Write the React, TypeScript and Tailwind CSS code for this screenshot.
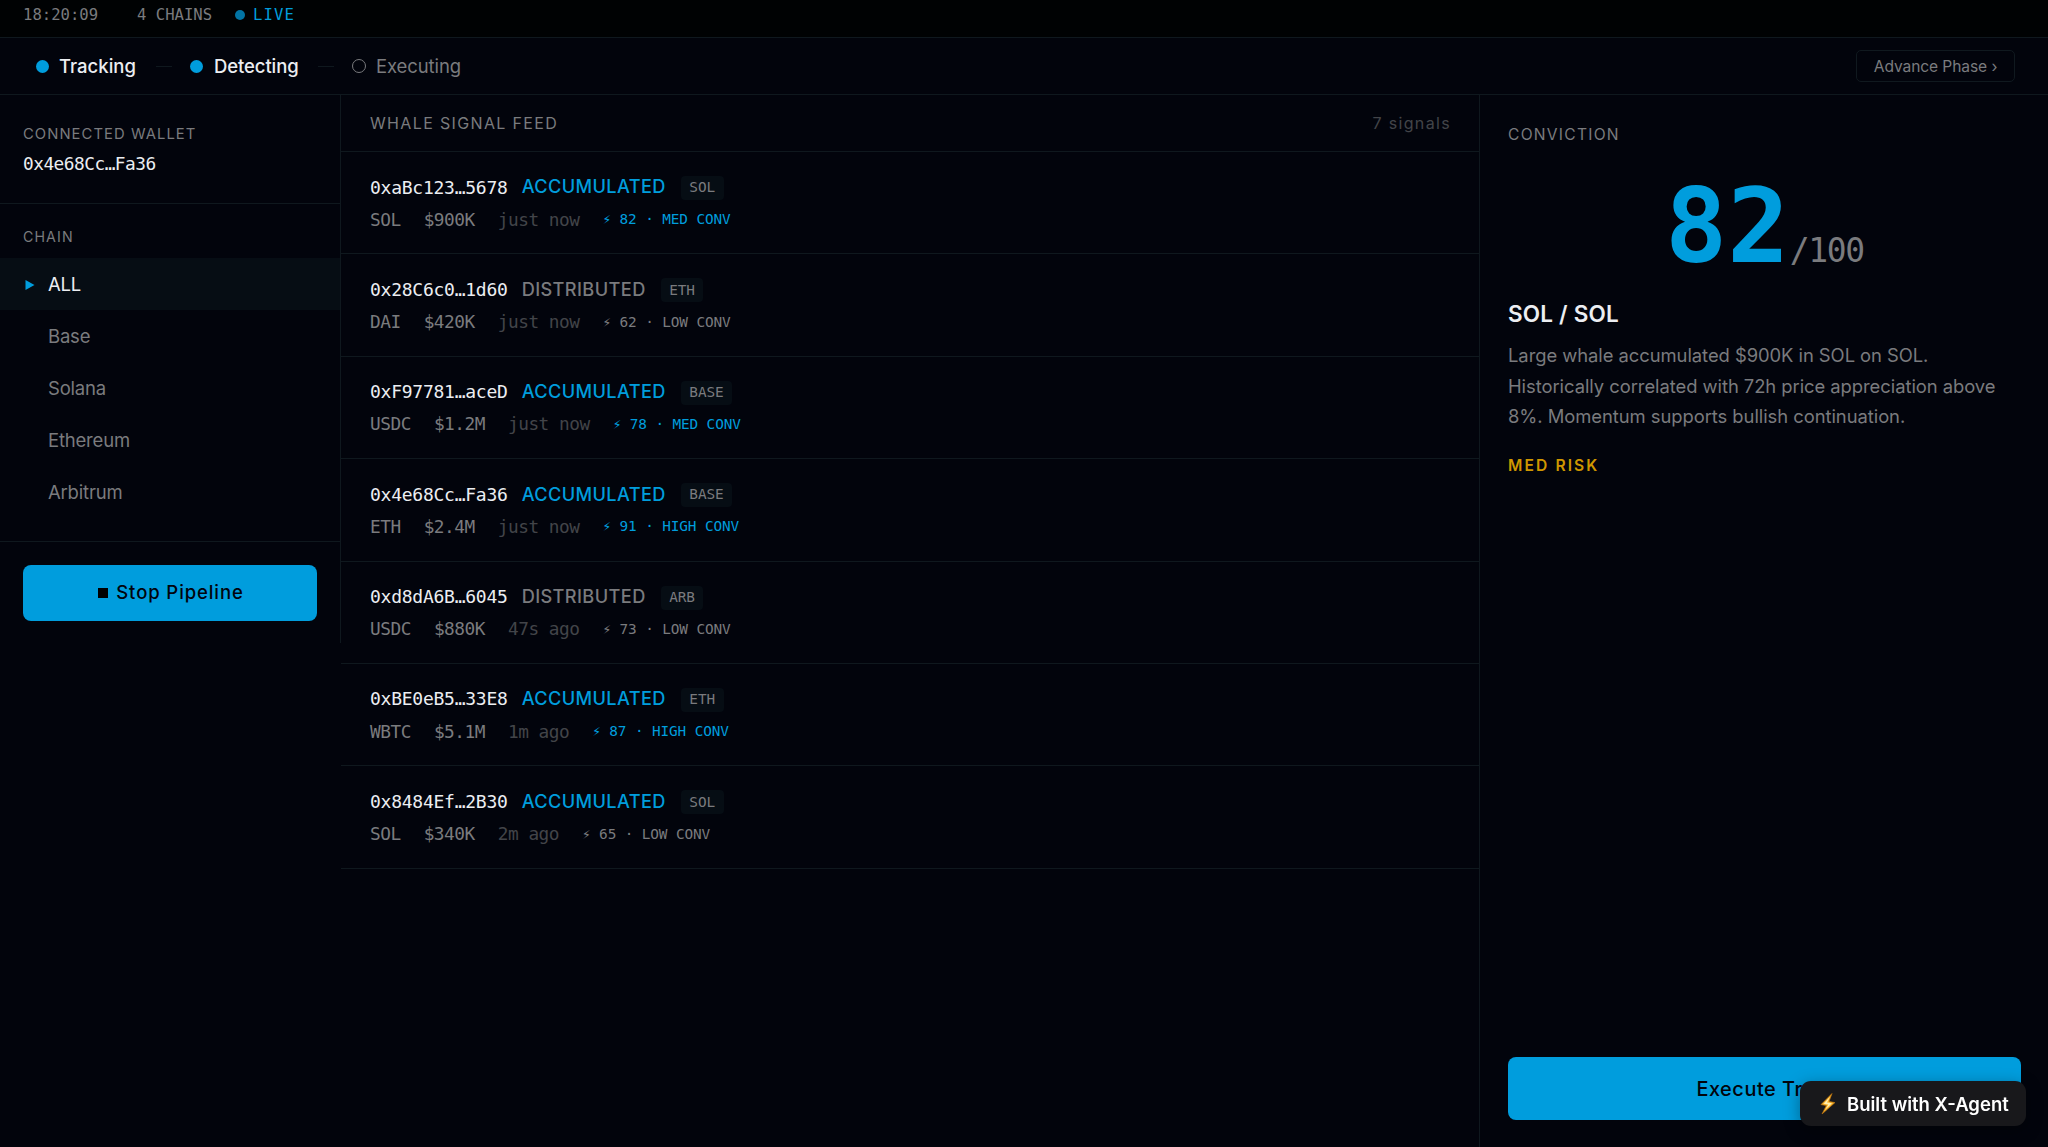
import { ReactNode } from "react";

const EAction = {
    Accumulated: "ACCUMULATED",
    Distributed: "DISTRIBUTED",
} as const;
type EAction = (typeof EAction)[keyof typeof EAction];

interface ISignal {
    wallet: string;
    action: EAction;
    chain: string;
    token: string;
    amount: string;
    time: string;
    score: number;
    level: "LOW" | "MED" | "HIGH";
}

const signals: ISignal[] = [
    { wallet: "0xaBc123…5678", action: EAction.Accumulated, chain: "SOL", token: "SOL", amount: "$900K", time: "just now", score: 82, level: "MED" },
    { wallet: "0x28C6c0…1d60", action: EAction.Distributed, chain: "ETH", token: "DAI", amount: "$420K", time: "just now", score: 62, level: "LOW" },
    { wallet: "0xF97781…aceD", action: EAction.Accumulated, chain: "BASE", token: "USDC", amount: "$1.2M", time: "just now", score: 78, level: "MED" },
    { wallet: "0x4e68Cc…Fa36", action: EAction.Accumulated, chain: "BASE", token: "ETH", amount: "$2.4M", time: "just now", score: 91, level: "HIGH" },
    { wallet: "0xd8dA6B…6045", action: EAction.Distributed, chain: "ARB", token: "USDC", amount: "$880K", time: "47s ago", score: 73, level: "LOW" },
    { wallet: "0xBE0eB5…33E8", action: EAction.Accumulated, chain: "ETH", token: "WBTC", amount: "$5.1M", time: "1m ago", score: 87, level: "HIGH" },
    { wallet: "0x8484Ef…2B30", action: EAction.Accumulated, chain: "SOL", token: "SOL", amount: "$340K", time: "2m ago", score: 65, level: "LOW" },
];

const chains = ["ALL", "Base", "Solana", "Ethereum", "Arbitrum"];

export default function App() {
    return (
        <div className="flex h-screen flex-col overflow-hidden bg-[#02040c] font-['Inter','Liberation_Sans',sans-serif] text-[#7a7b7e]">
            <TopBar />
            <PhaseBar />
            <main className="flex min-h-0 flex-1 items-start">
                <Sidebar />
                <Feed />
                <Conviction />
            </main>
            <BuiltWithBadge />
        </div>
    );
}

function Mono({ className, children }: { className: string; children: ReactNode }) {
    return <span className={`font-['DejaVu_Sans_Mono',monospace] whitespace-pre ${className}`}>{children}</span>;
}

function TopBar() {
    return (
        <header className="flex h-[38px] shrink-0 items-start border-b border-[#0f181e] bg-[#000203] pt-[5px] pl-[23px]">
            <Mono className="w-[114px] text-[15.6px] leading-[21px]">18:20:09</Mono>
            <Mono className="w-[98px] text-[15.6px] leading-[21px]">4 CHAINS</Mono>
            <div className="mt-[5px] mr-[8px] size-[10px] rounded-full bg-[#0274a4]" />
            <Mono className="text-[15.6px] leading-[21px] tracking-[1.1px] text-[#009ddd]">LIVE</Mono>
        </header>
    );
}

function PhaseBar() {
    return (
        <div className="flex h-[57px] shrink-0 items-center border-b border-[#0f181e] pr-[33px] pl-[36px] text-[18.5px]">
            <div className="size-[13px] rounded-full bg-[#009ddd]" />
            <span className="mt-[2px] ml-[10px] w-[97px] font-medium tracking-[0px] text-[#eceef2]">Tracking</span>
            <div className="h-px w-[16px] bg-[#0f181e]" />
            <div className="ml-[18px] size-[13px] rounded-full bg-[#009ddd]" />
            <span className="mt-[2px] ml-[11px] w-[104px] font-medium tracking-[-0.1px] text-[#eceef2]">Detecting</span>
            <div className="h-px w-[16px] bg-[#0f181e]" />
            <div className="ml-[18px] size-[14px] rounded-full border border-[#7a7b7e]" />
            <span className="mt-[2px] ml-[10px] tracking-[-0.1px]">Executing</span>
            <button className="ml-auto h-[32px] w-[159px] rounded-[5px] border border-[#10191f] pt-[1px] text-[15.6px] tracking-[-0.1px]">
                Advance Phase ›
            </button>
        </div>
    );
}

function Sidebar() {
    return (
        <aside className="flex h-[548px] w-[341px] shrink-0 flex-col border-r border-[#0f181e]">
            <section className="flex h-[109px] flex-col border-b border-[#0f181e] pt-[28px] pl-[23px]">
                <span className="text-[14.8px] leading-[22px] tracking-[1.05px]">CONNECTED WALLET</span>
                <Mono className="mt-[8px] text-[17.8px] leading-[22px] tracking-[-0.5px] text-[#eceef2]">0x4e68Cc…Fa36</Mono>
            </section>
            <nav className="flex h-[338px] flex-col border-b border-[#0f181e] pt-[22px]">
                <span className="h-[32px] pl-[23px] text-[14.2px] leading-[22px] tracking-[1.1px]">CHAIN</span>
                {chains.map((chain) => {
                    const active = chain === "ALL";
                    return (
                        <div
                            key={chain}
                            className={`flex h-[52px] shrink-0 items-center pt-[2px] pl-[25px] text-[18.5px] tracking-[-0.2px] ${active ? "bg-[#060d14] text-[#eceef2]" : ""}`}
                        >
                            <div className="w-[23px]">
                                {active && (
                                    <svg width="10" height="10" viewBox="0 0 10 10" fill="#009ddd">
                                        <path d="M0.5 0L9.5 5L0.5 10Z" />
                                    </svg>
                                )}
                            </div>
                            {chain}
                        </div>
                    );
                })}
            </nav>
            <button className="mx-[23px] mt-[23px] flex h-[56px] items-center justify-center gap-[8px] rounded-[8px] bg-[#009ddd] pl-[2px] text-[18.5px] font-medium tracking-[0.9px] text-[#02040c]">
                <span className="size-[10px] bg-black" />
                Stop Pipeline
            </button>
        </aside>
    );
}

function Feed() {
    return (
        <section className="min-w-0 flex-1">
            <div className="flex h-[57px] items-center justify-between border-b border-[#0f181e] pr-[28px] pl-[29px] text-[16px] tracking-[1.35px]">
                <span>WHALE SIGNAL FEED</span>
                <span className="text-[#424449]">7 signals</span>
            </div>
            {signals.map((signal) => (
                <SignalRow key={signal.wallet} signal={signal} />
            ))}
        </section>
    );
}

function SignalRow({ signal }: { signal: ISignal }) {
    const { wallet, action, chain, token, amount, time, score, level } = signal;
    return (
        <div className="h-[102.4px] border-b border-[#0f181e] pt-[22px] pl-[29px]">
            <div className="flex h-[26px] items-center">
                <Mono className="text-[18px] tracking-[-0.25px] text-[#eceef2]">{wallet}</Mono>
                <span
                    className={`ml-[14px] text-[18.2px] font-medium tracking-[0.38px] ${action === EAction.Accumulated ? "text-[#009ddd]" : ""}`}
                >
                    {action}
                </span>
                <Mono className="mt-[2px] ml-[15px] flex h-[24px] items-center rounded-[4px] bg-[#060d14] px-[8.5px] text-[14.4px] tracking-[-0.1px]">
                    {chain}
                </Mono>
            </div>
            <div className="mt-[8px] flex h-[24px] items-center gap-[23px]">
                <Mono className="text-[17.8px] tracking-[-0.49px]">{token}</Mono>
                <Mono className="text-[17.8px] tracking-[-0.49px]">{amount}</Mono>
                <Mono className="text-[17.8px] tracking-[-0.49px] text-[#424449]">{time}</Mono>
                <Mono className={`text-[14.4px] tracking-[-0.13px] ${level === "LOW" ? "" : "text-[#009ddd]"}`}>
                    ⚡︎ {score} · {level} CONV
                </Mono>
            </div>
        </div>
    );
}

function Conviction() {
    return (
        <aside className="flex h-full w-[569px] shrink-0 flex-col border-l border-[#0f181e] pt-[29px] pr-[27px] pb-[27px] pl-[28px]">
            <span className="text-[15.6px] leading-[22px] tracking-[1.25px]">CONVICTION</span>
            <div className="mt-[36px] flex h-[88px] items-baseline justify-center leading-[88px]">
                <Mono className="text-[103.5px] font-bold text-[#009ddd]">82</Mono>
                <Mono className="text-[33px] tracking-[-1.3px]">/100</Mono>
            </div>
            <h2 className="mt-[29px] text-[22.5px] leading-[30px] font-semibold tracking-[0.2px] text-[#eceef2]">SOL / SOL</h2>
            <p className="mt-[11px] text-[18.4px] leading-[30.7px] tracking-[-0.05px]">
                Large whale accumulated $900K in SOL on SOL.
                <br />
                Historically correlated with 72h price appreciation above
                <br />
                8%. Momentum supports bullish continuation.
            </p>
            <span className="mt-[23px] text-[15.6px] leading-[22px] font-semibold tracking-[2.1px] text-[#cf9700]">MED RISK</span>
            <button className="mt-auto h-[63px] shrink-0 rounded-[8px] bg-[#009ddd] pt-[2px] pl-[7px] text-[19.9px] font-medium tracking-[0.55px] text-[#02040c]">
                Execute Trade
            </button>
        </aside>
    );
}

function BuiltWithBadge() {
    return (
        <div className="fixed right-[22px] bottom-[21px] flex h-[45px] w-[226px] items-center rounded-[11px] bg-[#18181b] pt-[2px] pl-[19px] text-[18.5px] font-semibold text-white shadow-[0_4px_16px_rgba(0,0,0,0.35)]">
            <svg className="-mt-[2px] mr-[11px]" width="17" height="22" viewBox="0 0 17 22">
                <path d="M13 0.5L2 11.6L7.4 12.6L3 21L16 9.6L10 8.5Z" fill="#fbb52c" stroke="#b8700f" strokeWidth="0.7" />
                <path d="M10.8 4L4.6 10.7L9.3 11.6L6.4 16.4L13 10.3L8 9.4Z" fill="#ffeeb0" />
            </svg>
            Built with X-Agent
        </div>
    );
}
